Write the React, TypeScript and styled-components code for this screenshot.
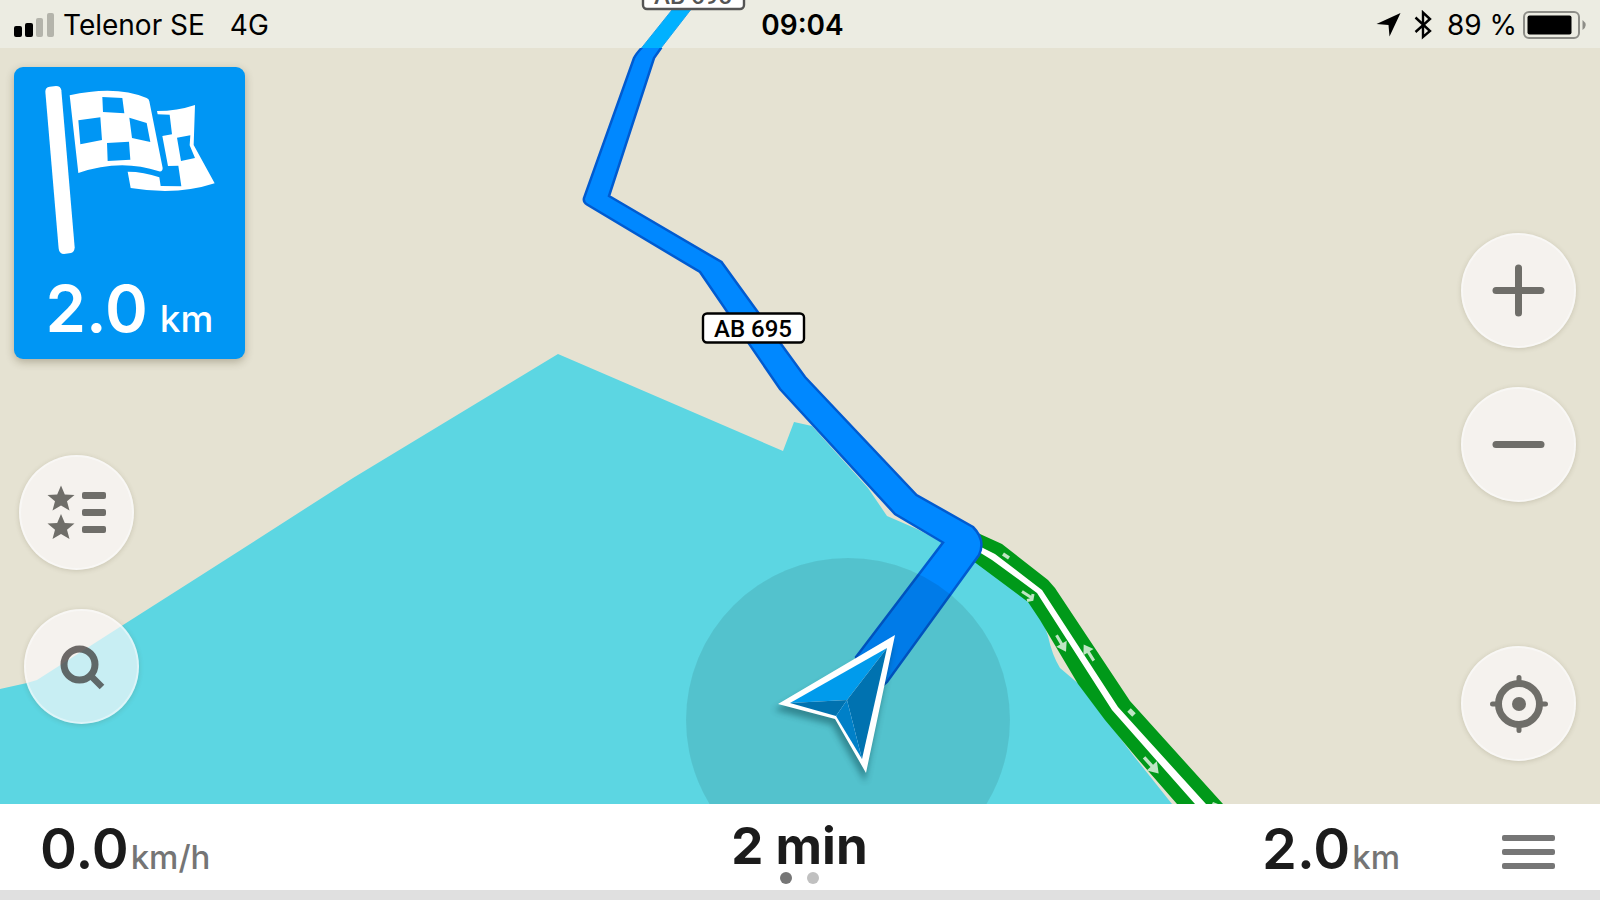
import React from "react";
import styled, { createGlobalStyle } from "styled-components";

const GlobalStyle = createGlobalStyle`
  *, *::before, *::after { box-sizing: border-box; }
  body {
    margin: 0;
    background: #ffffff;
    font-family: Inter, Roboto, "Liberation Sans", sans-serif;
  }
`;

const Screen = styled.div`
  display: flex;
  flex-direction: column;
  min-height: 100vh;
`;

const MapArea = styled.main`
  position: relative;
  flex: 1;
  display: flex;
  flex-direction: column;
  overflow: hidden;
  background: #e5e2d2;
`;

const MapCanvas = styled.svg`
  position: absolute;
  inset: 0;
  width: 100%;
  height: 100%;
`;

const ShieldText = styled.text`
  font-family: Roboto, "Liberation Sans", sans-serif;
  font-size: 24px;
  font-weight: 500;
  text-anchor: middle;
`;

const StatusBar = styled.header`
  position: relative;
  display: grid;
  grid-template-columns: 1fr auto 1fr;
  align-items: center;
  height: 48px;
  padding: 1px 13px 0;
  color: #000000;
  font-size: 28px;
  line-height: 48px;
`;

const StatusGroup = styled.div<{ $end?: boolean }>`
  display: flex;
  align-items: center;
  justify-content: ${(p) => (p.$end ? "flex-end" : "flex-start")};
  white-space: nowrap;
`;

const Carrier = styled.span`
  margin: 0 25px 0 8px;
`;

const Clock = styled.time`
  padding-left: 5px;
  font-weight: 600;
`;

const BatteryLevel = styled.span`
  margin: 0 6px 0 15px;
`;

const BluetoothIcon = styled.svg`
  margin-left: 13px;
`;

const Controls = styled.div`
  position: relative;
  flex: 1;
  display: flex;
  justify-content: space-between;
  padding: 19px 24px 0 14px;
`;

const Column = styled.div`
  display: flex;
  flex-direction: column;
  justify-content: space-between;
`;

const ButtonStack = styled.div`
  display: flex;
  flex-direction: column;
  gap: 39px;
`;

const ShortcutStack = styled(ButtonStack)`
  align-items: flex-start;
  width: 130px;
  padding: 0 5px 80px;

  & > :last-child {
    align-self: flex-end;
  }
`;

const RightColumn = styled(Column)`
  padding: 166px 0 43px;
`;

const RoundButton = styled.button`
  display: grid;
  place-items: center;
  width: 115px;
  height: 115px;
  padding: 0;
  border: 2px solid rgba(255, 255, 255, 0.4);
  border-radius: 50%;
  background: rgba(252, 249, 250, 0.68);
  box-shadow: 0 1px 5px rgba(90, 80, 50, 0.2);
  cursor: pointer;
`;

const TurnCard = styled.section`
  display: flex;
  flex-direction: column;
  align-items: center;
  width: 231px;
  height: 292px;
  padding-top: 18px;
  border-radius: 9px;
  background: #0096f4;
  box-shadow: 0 3px 8px rgba(60, 50, 20, 0.3);
  color: #ffffff;

  & > svg {
    flex-shrink: 0;
  }
`;

const TurnDistance = styled.p`
  display: flex;
  align-items: baseline;
  gap: 12px;
  margin: 14px 0 0;
  font-size: 65px;
  font-weight: 600;
  line-height: 80px;
`;

const TurnUnit = styled.span`
  font-size: 37px;
  font-weight: 500;
  line-height: 40px;
`;

const InfoBar = styled.footer`
  display: grid;
  grid-template-columns: 1fr auto 1fr;
  height: 96px;
  padding: 0 45px 0 40px;
  border-bottom: 10px solid #e0e0e0;
  background: #ffffff;
  color: #1b1b1b;
`;

const Metric = styled.div`
  display: flex;
  align-items: baseline;
  gap: 2px;
  font-size: 56px;
  font-weight: 600;
  line-height: 90px;
`;

const MetricUnit = styled.span`
  color: #757575;
  font-size: 33px;
  font-weight: 500;
`;

const Summary = styled.div`
  display: flex;
  flex-direction: column;
  align-items: center;
  padding: 8px 0 0 4px;
  font-size: 51px;
  font-weight: 700;
  line-height: 68px;
`;

const Pager = styled.div`
  display: flex;
  gap: 15px;
  margin-top: -8px;
`;

const Dot = styled.span<{ $active?: boolean }>`
  width: 12px;
  height: 12px;
  border-radius: 50%;
  background: ${(p) => (p.$active ? "#767676" : "#c0c0c0")};
`;

const RightMetrics = styled.div`
  display: flex;
  justify-content: flex-end;
  align-items: flex-start;
  gap: 102px;
`;

const MenuButton = styled.button`
  display: flex;
  flex-direction: column;
  gap: 8px;
  margin-top: 31px;
  padding: 0;
  border: 0;
  background: none;
  cursor: pointer;
`;

const MenuLine = styled.span`
  width: 53px;
  height: 6px;
  border-radius: 2px;
  background: #767676;
`;

const ICON = "#6f6e69";

function RoadShield({ x, y, muted }: { x: number; y: number; muted?: boolean }) {
  const ink = muted ? "#555555" : "#000000";
  return (
    <g>
      <rect x={x - 51} y={y - 14.5} width={101} height={29} rx={4} fill="#ffffff" stroke={ink} strokeWidth={2.4} />
      <ShieldText x={x - 1} y={y + 9} fill={ink}>
        AB 695
      </ShieldText>
    </g>
  );
}

function LaneArrow({ x, y, angle, size = 1 }: { x: number; y: number; angle: number; size?: number }) {
  return (
    <path
      d="M-9 -1.5H1V-6L10 0L1 6V1.5H-9Z"
      fill="#bfe5c4"
      transform={`translate(${x} ${y}) rotate(${angle}) scale(${size})`}
    />
  );
}

function RouteMap() {
  const route =
    "M688 -10 L641.5 48 Q636 54 634 58 L584 198 Q583 202 587 204.500 L700 272 L780 389 L895 514 L943 542.500 L856 657 L866 700 L887 682 L979 555 Q986 540 973 527 L916.500 495 L805 377 L721.500 262 L609 196 L654 58 L661 48 L706 -10Z";
  return (
    <MapCanvas viewBox="0 0 1600 804" preserveAspectRatio="xMidYMin slice" aria-hidden="true">
      <defs>
        <clipPath id="under-status">
          <rect width="1600" height="48" />
        </clipPath>
        <filter id="soft" x="-20%" y="-20%" width="140%" height="140%">
          <feGaussianBlur stdDeviation="3" />
        </filter>
      </defs>
      <path
        d="M0 689 L27 683 L37 680 L123 625 L200 576 L353 478 L558 354 L783 451 L794 422 L812 426 L868 488 L887 516 L917 529 L943 543 L985 555 L1035 600 L1048 636 Q1052 655 1060 668 L1080 685 L1133 755 L1172 804 H0Z"
        fill="#5cd6e2"
      />
      <path
        d="M965 527 L980 534 L1002 544 L1048 580 L1055 588 L1130 701 L1223 804 H1177 L1136 757 L1105 720 L1078 684 L1040 620 L1028 602 L973 561 L955 550Z"
        fill="#009919"
      />
      <path
        d="M970 542 L981 547 L995 554 L1042 590 L1118 707 L1206 804 H1195 L1112 710 L1037 593 L992 560 L979 552Z"
        fill="#ffffff"
      />
      <g stroke="#bfe5c4" strokeWidth="3.500">
        <path d="M1003 554 L1009 558" />
        <path d="M1129 710 L1134 715" strokeWidth="5" />
      </g>
      <path d="M1022 591.500 L1032 598 M1027 600.500 L1032 599.500 L1033 594" fill="none" stroke="#bfe5c4" strokeWidth="3" />
      <LaneArrow x={1061} y={643} angle={60} />
      <LaneArrow x={1089} y={653} angle={-122} />
      <LaneArrow x={1151} y={765} angle={48} size={1.15} />
      <path d="M1212 804 L1213 802 L1218 804Z" fill="#bfe5c4" />

      <path d={route} fill="#0088ff" stroke="#005bd0" strokeWidth="2.500" />
      <circle cx="848" cy="720" r="162" fill="#000000" fillOpacity="0.09" />

      <rect width="1600" height="48" fill="#ecece2" />
      <path d={route} fill="#00b1ff" stroke="#18a4ef" strokeWidth="1" clipPath="url(#under-status)" />
      <RoadShield x={694} y={-5.5} muted />
      <RoadShield x={754} y={328} />

      <path d="M893 642 L774 710 L832 725 L865 782Z" fill="#00303a" opacity="0.4" filter="url(#soft)" />
      <path d="M895 635 L778 704 L835 719 L866 773Z" fill="#ffffff" />
      <path d="M887 648 L790 703 L847 700Z" fill="#009bec" />
      <path d="M887 648 L847 700 L862 759Z" fill="#0072b0" />
      <path d="M790 703 L847 700 L836 716Z" fill="#0072b0" />
      <path d="M847 700 L836 716 L862 759Z" fill="#0080c8" />
    </MapCanvas>
  );
}

function FlagIcon() {
  return (
    <svg width="172" height="170" viewBox="130 255 516 510" aria-hidden="true">
      <path
        fill="#ffffff"
        d="M134 275 Q134 262 147 260 L166 258 Q180 258 182 271 L222 742 Q222 756 211 759 L190 762 Q176 761 174 746Z"
      />
      <path
        fill="#ffffff"
        fillRule="evenodd"
        d="M207 286 Q345 255 438 294 Q445 297 446 304 L486 504 Q486 516 475 514 Q360 475 233 519Z
           M305 291 L307 336 L371 340 L365 294Z
           M233 361 L239 433 L304 420 L299 352Z
           M386 353 L394 414 L449 426 L438 369Z
           M319 429 L321 483 L389 479 L385 425Z"
      />
      <path
        fill="#ffffff"
        fillRule="evenodd"
        d="M469 333 Q530 333 583 315 L579 435 L642 550 Q530 587 390 564 L381 515 Q430 515 476 532 L480 558 L542 559 L533 497 L502 498 L485 408 L514 403 L507 344 L471 343Z
           M529 413 L541 483 L583 474 L567 436 L569 406Z"
      />
    </svg>
  );
}

function StarListIcon() {
  const star =
    "M0 -13.500 L3.800 -4.500 L13.500 -4 L6 2.300 L8.500 11.500 L0 6.500 L-8.500 11.500 L-6 2.300 L-13.500 -4 L-3.800 -4.500Z";
  return (
    <svg width="60" height="56" viewBox="0 0 60 56" fill={ICON} aria-hidden="true">
      <path d={star} transform="translate(14 14)" />
      <path d={star} transform="translate(14 42.500)" />
      <rect x="35" y="7" width="24" height="7" rx="2" />
      <rect x="35" y="24" width="24" height="7" rx="2" />
      <rect x="35" y="41" width="24" height="7" rx="2" />
    </svg>
  );
}

function SearchIcon() {
  return (
    <svg width="50" height="50" viewBox="0 0 50 50" fill="none" stroke="#34302e" opacity="0.7" aria-hidden="true">
      <circle cx="22.500" cy="22.500" r="15.500" strokeWidth="7" />
      <path d="M33.500 33.500 L45 45" strokeWidth="6.500" />
    </svg>
  );
}

function ZoomIcon({ plus }: { plus?: boolean }) {
  return (
    <svg width="54" height="54" viewBox="0 0 54 54" stroke={ICON} strokeWidth="7" strokeLinecap="round" aria-hidden="true">
      <path d="M4 26.500H49" />
      {plus && <path d="M26.500 4V49" />}
    </svg>
  );
}

function LocateIcon() {
  return (
    <svg width="58" height="58" viewBox="0 0 58 58" fill="none" stroke={ICON} aria-hidden="true">
      <circle cx="29" cy="29" r="20.500" strokeWidth="7" />
      <circle cx="29" cy="29" r="7" fill={ICON} stroke="none" />
      <path d="M29 2.500V8 M29 50V55.500 M2.500 29H8 M50 29H55.500" strokeWidth="5" strokeLinecap="round" />
    </svg>
  );
}

function SignalIcon() {
  return (
    <svg width="42" height="26" viewBox="0 0 42 26" aria-hidden="true">
      <rect x="1" y="14" width="8" height="11" rx="2" />
      <rect x="12" y="11" width="8" height="14" rx="2" />
      <rect x="23" y="6" width="7" height="19" rx="2" fill="#b4b4ab" />
      <rect x="34" y="1" width="7" height="24" rx="2" fill="#b4b4ab" />
    </svg>
  );
}

export default function App() {
  return (
    <Screen>
      <GlobalStyle />
      <MapArea>
        <RouteMap />
        <StatusBar>
          <StatusGroup>
            <SignalIcon />
            <Carrier>Telenor SE</Carrier>
            <span>4G</span>
          </StatusGroup>
          <Clock>09:04</Clock>
          <StatusGroup $end>
            <svg width="25" height="24" viewBox="0 0 25 24" aria-hidden="true">
              <path d="M24.500 0 L13.500 23.500 L12.500 12 L0.500 11Z" />
            </svg>
            <BluetoothIcon width="18" height="30" viewBox="0 0 18 30" fill="none" stroke="#000000" strokeWidth="2.400" aria-hidden="true">
              <path d="M1.500 7.500 L16 21 L9 27 V2.500 L16 9 L1.500 22" />
            </BluetoothIcon>
            <BatteryLevel>89 %</BatteryLevel>
            <svg width="64" height="28" viewBox="0 0 64 28" aria-hidden="true">
              <rect x="1" y="1" width="55" height="26" rx="5" fill="none" stroke="#8d8d87" strokeWidth="2" />
              <rect x="4.500" y="4.500" width="44" height="19" rx="2" />
              <path d="M59.500 9 Q66 14 59.500 19Z" fill="#8d8d87" />
            </svg>
          </StatusGroup>
        </StatusBar>
        <Controls>
          <Column>
            <TurnCard>
              <FlagIcon />
              <TurnDistance>
                2.0 <TurnUnit>km</TurnUnit>
              </TurnDistance>
            </TurnCard>
            <ShortcutStack>
              <RoundButton aria-label="Bookmarks">
                <StarListIcon />
              </RoundButton>
              <RoundButton aria-label="Search">
                <SearchIcon />
              </RoundButton>
            </ShortcutStack>
          </Column>
          <RightColumn>
            <ButtonStack>
              <RoundButton aria-label="Zoom in">
                <ZoomIcon plus />
              </RoundButton>
              <RoundButton aria-label="Zoom out">
                <ZoomIcon />
              </RoundButton>
            </ButtonStack>
            <RoundButton aria-label="My position">
              <LocateIcon />
            </RoundButton>
          </RightColumn>
        </Controls>
      </MapArea>
      <InfoBar>
        <Metric>
          0.0<MetricUnit>km/h</MetricUnit>
        </Metric>
        <Summary>
          2 min
          <Pager>
            <Dot $active />
            <Dot />
          </Pager>
        </Summary>
        <RightMetrics>
          <Metric>
            2.0<MetricUnit>km</MetricUnit>
          </Metric>
          <MenuButton aria-label="Menu">
            <MenuLine />
            <MenuLine />
            <MenuLine />
          </MenuButton>
        </RightMetrics>
      </InfoBar>
    </Screen>
  );
}
